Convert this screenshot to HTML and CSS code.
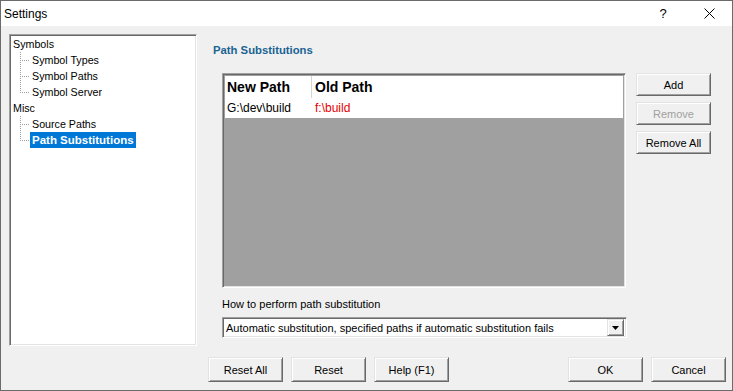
FILE: index.html
```html
<!DOCTYPE html>
<html lang="en">

<head>
    <meta charset="UTF-8">
    <title>Settings</title>
    <link rel="stylesheet" href="styles.css">
</head>

<body>
    <div class="window">
        <div class="titlebar">
            <span class="title">Settings</span>
            <div class="caption-btns">
                <span class="cap-btn">?</span>
                <span class="cap-btn">
                    <svg width="11" height="11" viewBox="0 0 11 11"><path d="M0.5 0.5L10.5 10.5M10.5 0.5L0.5 10.5" stroke="#000" stroke-width="1"/></svg>
                </span>
            </div>
        </div>

        <div class="client">
            <!-- settings tree -->
            <div class="tree">
                <div class="node">Symbols</div>
                <div class="child"><span class="elbow"></span><span class="label">Symbol Types</span></div>
                <div class="child"><span class="elbow"></span><span class="label">Symbol Paths</span></div>
                <div class="child"><span class="elbow last"></span><span class="label">Symbol Server</span></div>
                <div class="node">Misc</div>
                <div class="child"><span class="elbow"></span><span class="label">Source Paths</span></div>
                <div class="child"><span class="elbow last"></span><span class="label selected">Path Substitutions</span></div>
            </div>

            <div class="main">
                <div class="page">
                    <h2 class="page-title">Path Substitutions</h2>

                    <div class="subst">
                        <div class="listview">
                            <div class="lv-header">
                                <div class="col col-new">New Path</div>
                                <div class="col col-old">Old Path</div>
                            </div>
                            <div class="lv-row">
                                <div class="col col-new">G:\dev\build</div>
                                <div class="col col-old old">f:\build</div>
                            </div>
                        </div>

                        <div class="side-btns">
                            <button class="btn">Add</button>
                            <button class="btn" disabled>Remove</button>
                            <button class="btn">Remove All</button>
                        </div>
                    </div>

                    <div class="field-label">How to perform path substitution</div>
                    <div class="combo">
                        <span class="combo-text">Automatic substitution, specified paths if automatic substitution fails</span>
                        <span class="combo-btn">
                            <svg width="7" height="4" viewBox="0 0 7 4"><path d="M0 0H7L3.5 4Z" fill="#000"/></svg>
                        </span>
                    </div>
                </div>

                <div class="dialog-btns">
                    <div class="btn-group">
                        <button class="btn">Reset All</button>
                        <button class="btn">Reset</button>
                        <button class="btn">Help (F1)</button>
                    </div>
                    <div class="btn-group">
                        <button class="btn">OK</button>
                        <button class="btn">Cancel</button>
                    </div>
                </div>
            </div>
        </div>
    </div>
</body>
</html>
```

FILE: styles.css
```css
body {
    margin: 0;
    padding: 0;
    font-family: 'Liberation Sans', Arial, sans-serif;
    font-size: 11px;
    color: #000;
    background-color: #f0f0f0;
}

.window {
    width: 733px;
    height: 391px;
    box-sizing: border-box;
    border: 1px solid #6b6b6b;
    background-color: #f0f0f0;
    display: flex;
    flex-direction: column;
}

.titlebar {
    height: 25px;
    flex: none;
    background-color: #fff;
    display: flex;
    align-items: center;
    justify-content: space-between;
}

.title {
    font-size: 12px;
    padding-left: 3px;
}

.caption-btns {
    display: flex;
    height: 100%;
}

.cap-btn {
    width: 46px;
    display: flex;
    align-items: center;
    justify-content: center;
    font-size: 13px;
}

.client {
    flex: 1;
    display: flex;
}

/* tree */
.tree {
    width: 188px;
    height: 312px;
    margin: 8px 0 0 8px;
    box-sizing: border-box;
    background-color: #fff;
    border: 1px solid;
    border-color: #a0a0a0 #fff #fff #a0a0a0;
    box-shadow: inset 1px 1px 0 #696969, inset -1px -1px 0 #e3e3e3;
    padding: 1px 0 0 2px;
    line-height: 16px;
    font-size: 10.7px;
}

.node {
    padding-left: 1px;
}

.child {
    display: flex;
    height: 16px;
}

.elbow {
    flex: none;
    width: 10px;
    height: 16px;
    margin-left: 8px;
    background:
        repeating-linear-gradient(to bottom, #a0a0a0 0 1px, transparent 1px 2px) 0 0 / 1px 100% no-repeat,
        repeating-linear-gradient(to right, #a0a0a0 0 1px, transparent 1px 2px) 0 8px / 100% 1px no-repeat;
}

.elbow.last {
    background-size: 1px 9px, 100% 1px;
}

.label {
    padding: 0 2px;
}

.label.selected {
    background-color: #0078d7;
    color: #fff;
    font-weight: bold;
    font-size: 11.5px;
}

/* right side */
.main {
    flex: 1;
    margin-left: 11px;
    display: flex;
    flex-direction: column;
}

.page {
    flex: 1;
}

.page-title {
    margin: 18px 0 0 5px;
    font-size: 11.3px;
    line-height: 13px;
    font-weight: bold;
    color: #1a6494;
}

.subst {
    display: flex;
    margin: 16px 0 0 14px;
}

.listview {
    width: 404px;
    height: 215px;
    box-sizing: border-box;
    background-color: #a0a0a0;
    border: 1px solid;
    border-color: #a0a0a0 #fff #fff #a0a0a0;
    box-shadow: inset 1px 1px 0 #696969, inset -1px -1px 0 #e3e3e3;
    padding: 2px 2px 0 2px;
}

.lv-header,
.lv-row {
    display: flex;
    background-color: #fff;
}

.lv-header {
    height: 22px;
    align-items: center;
    font-size: 14px;
    font-weight: bold;
}

.lv-row {
    height: 20px;
    align-items: center;
    font-size: 12px;
}

.col {
    box-sizing: border-box;
    padding-left: 2px;
}

.col-new {
    width: 87px;
}

.lv-header .col-new {
    height: 100%;
    display: flex;
    align-items: center;
    border-right: 1px solid #d5d5d5;
}

.col-old {
    padding-left: 3px;
}

.old {
    color: #e80000;
}

.side-btns {
    display: flex;
    flex-direction: column;
    gap: 6px;
    margin-left: 10px;
}

.btn {
    width: 75px;
    height: 23px;
    padding: 0;
    font-family: inherit;
    font-size: 11px;
    color: #000;
    background-color: #f0f0f0;
    border: 1px solid;
    border-color: #e3e3e3 #696969 #696969 #e3e3e3;
    box-shadow: inset 1px 1px 0 #fff, inset -1px -1px 0 #a0a0a0;
}

.btn:disabled {
    color: #a0a0a0;
}

.field-label {
    margin: 10px 0 0 14px;
    line-height: 13px;
}

.combo {
    width: 405px;
    height: 21px;
    margin: 6px 0 0 14px;
    box-sizing: border-box;
    display: flex;
    align-items: center;
    justify-content: space-between;
    background-color: #fff;
    border: 1px solid;
    border-color: #a0a0a0 #fff #fff #a0a0a0;
    box-shadow: inset 1px 1px 0 #696969, inset -1px -1px 0 #e3e3e3;
    padding: 2px;
}

.combo-text {
    padding-left: 1px;
}

.combo-btn {
    width: 17px;
    height: 17px;
    box-sizing: border-box;
    display: flex;
    align-items: center;
    justify-content: center;
    background-color: #f0f0f0;
    border: 1px solid;
    border-color: #e3e3e3 #696969 #696969 #e3e3e3;
    box-shadow: inset 1px 1px 0 #fff, inset -1px -1px 0 #a0a0a0;
}

.dialog-btns {
    display: flex;
    justify-content: space-between;
    margin: 0 6px 8px 0;
}

.dialog-btns .btn {
    height: 25px;
}

.btn-group {
    display: flex;
    gap: 8px;
}
```
